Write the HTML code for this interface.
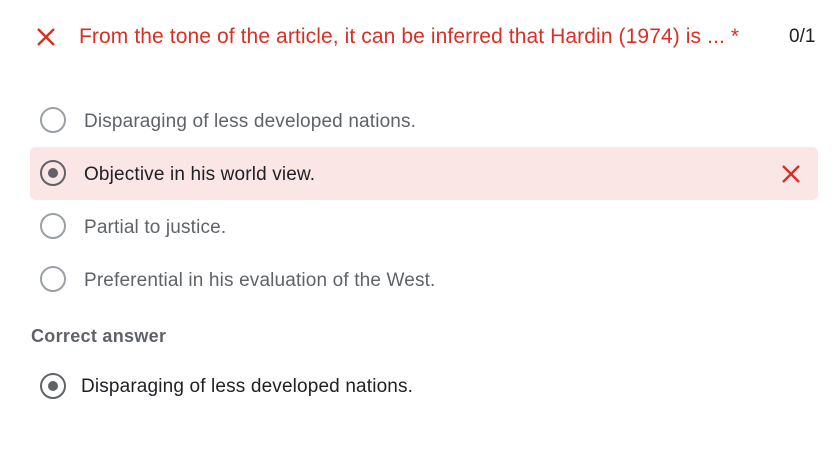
<!DOCTYPE html>
<html><head><style>
body{margin:0;width:834px;height:458px;background:#fff;font-family:"Liberation Sans",Arial,sans-serif;position:relative;overflow:hidden}
.a{position:absolute;white-space:nowrap}
.title{left:79px;top:25px;font-size:21px;color:#d93025;letter-spacing:0.1px}
.score{left:789px;top:26px;font-size:19px;color:#202124}
.r{position:absolute;width:22px;height:22px;border:2px solid #9aa0a6;border-radius:50%;box-sizing:content-box}
.r.on{border-color:#5f6368}
.r.on::after{content:"";position:absolute;left:6px;top:6px;width:10px;height:10px;border-radius:50%;background:#5f6368}
.opt{font-size:19px;color:#5f6368;letter-spacing:0.15px}
.hl{position:absolute;left:30px;top:147px;width:788px;height:53px;background:#f9e6e5;border-radius:5px}
</style></head><body>
<svg class="a" style="left:36px;top:27px" width="20" height="20" viewBox="0 0 20 20"><path d="M2 2L18 18M18 2L2 18" stroke="#d93025" stroke-width="2.4"/></svg>
<div class="a title">From the tone of the article, it can be inferred that Hardin (1974) is ... *</div>
<div class="a score">0/1</div>

<div class="r" style="left:40px;top:107px"></div>
<div class="a opt" style="left:84px;top:111px">Disparaging of less developed nations.</div>

<div class="hl"></div>
<div class="r on" style="left:40px;top:160px"></div>
<div class="a opt" style="left:84px;top:164px;color:#202124">Objective in his world view.</div>
<svg class="a" style="left:781px;top:164px" width="20" height="20" viewBox="0 0 20 20"><path d="M2 2L18 18M18 2L2 18" stroke="#d93025" stroke-width="2.4"/></svg>

<div class="r" style="left:40px;top:213px"></div>
<div class="a opt" style="left:84px;top:217px">Partial to justice.</div>

<div class="r" style="left:40px;top:266px"></div>
<div class="a opt" style="left:84px;top:270px">Preferential in his evaluation of the West.</div>

<div class="a" style="left:31px;top:326px;font-size:18px;color:#5f6368;font-weight:bold;letter-spacing:0.3px">Correct answer</div>

<div class="r on" style="left:40px;top:373px"></div>
<div class="a opt" style="left:81px;top:376px;color:#202124">Disparaging of less developed nations.</div>
</body></html>
